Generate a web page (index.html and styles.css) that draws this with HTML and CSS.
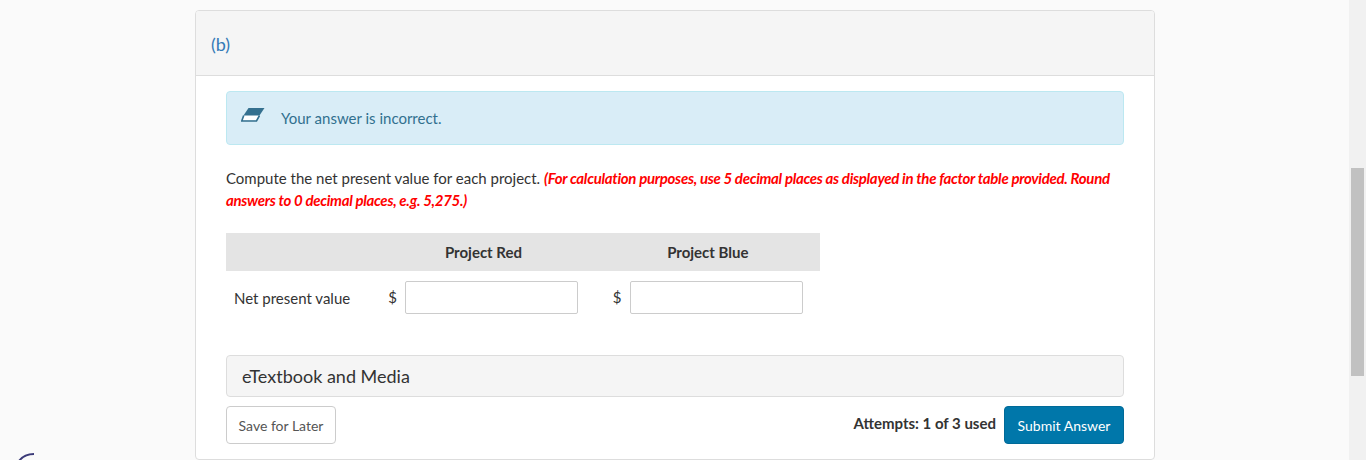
FILE: index.html
```html
<!DOCTYPE html>
<html lang="en">
<head>
<meta charset="utf-8">
<title>Question</title>
<link rel="stylesheet" href="styles.css">
</head>
<body>
<svg class="scribble" width="24" height="8" viewBox="0 0 24 8"><path d="M2 8C5 4 10 1 17 1" fill="none" stroke="#3b3a78" stroke-width="2"/></svg>
<main class="page">
  <section class="panel">
    <header class="panel-head">(b)</header>
    <div class="panel-body">
      <div class="alert">
        <svg class="eraser" width="24" height="16" viewBox="0 0 24 16"><path d="M7.5 1.5H23L15 13H1z" fill="#fff"/><path d="M7.5 1H23.5L18.5 8.5H2.5z" fill="#34708f"/><path d="M2.7 8.5L.8 14H15.5L18.5 8.5" fill="none" stroke="#34708f" stroke-width="1.6"/></svg>
        <span>Your answer is incorrect.</span>
      </div>
      <p class="prompt">Compute the net present value for each project. <em class="hint">(For calculation purposes, use 5 decimal places as displayed in the factor table provided. Round answers to 0 decimal places, e.g. 5,275.)</em></p>
      <div class="grid">
        <div class="grid-head">
          <span class="cell-blank"></span>
          <span class="cell-title">Project Red</span>
          <span class="cell-title">Project Blue</span>
        </div>
        <div class="grid-row">
          <span class="row-label">Net present value</span>
          <span class="money"><span class="dollar">$</span><input class="field" type="text"></span>
          <span class="money"><span class="dollar">$</span><input class="field" type="text"></span>
        </div>
      </div>
      <div class="media">eTextbook and Media</div>
      <div class="actions">
        <button class="btn btn-save">Save for Later</button>
        <div class="submit-group">
          <strong class="attempts">Attempts: 1 of 3 used</strong>
          <button class="btn btn-submit">Submit Answer</button>
        </div>
      </div>
    </div>
  </section>
</main>
<div class="scrollbar"><div class="thumb"></div></div>
</body>
</html>
```
FILE: styles.css
```css
* { box-sizing: border-box; }
html, body { margin: 0; height: 460px; overflow: hidden; }
body { background: #fafafa; font-family: Lato, sans-serif; font-size: 15px; color: #333; position: relative; }
.page { padding: 10px 0 0 195px; }
.panel { width: 960px; height: 450px; background: #fff; border: 1px solid #ddd; border-radius: 4px; overflow: hidden; }
.panel-head { height: 65px; background: #f5f5f5; border-bottom: 1px solid #ddd; padding: 21px 15px 0; font-size: 18px; line-height: 24px; color: #337ab7; }
.panel-body { padding: 15px 30px 0; }
.alert { height: 54px; display: flex; align-items: center; background: #d9edf7; border: 1px solid #bce8f1; border-radius: 4px; color: #31708f; padding: 0 14px 0 14px; gap: 16px; }
.eraser { margin-top: -6px; flex: none; }
.prompt { margin: 22px 0 0; line-height: 22px; }
.hint { color: #f00; font-weight: 700; letter-spacing: -0.3px; }
.grid { margin-top: 22px; width: 594px; }
.grid-head { display: flex; height: 38px; background: #e4e4e4; align-items: center; font-weight: 700; }
.cell-blank { width: 147px; }
.cell-title { width: 227px; text-align: center; padding-right: 0; }
.grid-row { display: flex; align-items: center; padding-top: 10px; }
.row-label { width: 147px; padding-left: 8px; padding-top: 1px; }
.money { width: 227px; display: flex; align-items: center; padding-left: 17px; }
.dollar { width: 17px; margin-top: -2px; }
.field { width: 173px; height: 33px; border: 1px solid #ccc; border-radius: 2px; background: #fff; }
.media { margin-top: 41px; height: 42px; background: #f5f5f5; border: 1px solid #ddd; border-radius: 4px; padding: 0 15px; line-height: 40px; font-size: 18px; }
.actions { display: flex; justify-content: space-between; margin-top: 9px; }
.submit-group { display: flex; align-items: center; gap: 8px; }
.attempts { font-size: 15px; margin-top: -4px; }
.btn { height: 38px; border-radius: 4px; font-family: Lato, sans-serif; font-size: 14px; padding: 0; }
.btn-save { width: 110px; background: #fff; border: 1px solid #ccc; color: #555; }
.btn-submit { width: 120px; background: #0077aa; border: 1px solid #006a98; color: #fff; }
.scrollbar { position: absolute; top: 0; right: 0; width: 17px; height: 460px; background: #f1f1f1; }
.thumb { position: absolute; top: 168px; left: 2px; width: 13px; height: 208px; background: #c1c1c1; }
.scribble { position: absolute; left: 17px; top: 453px; }
```
